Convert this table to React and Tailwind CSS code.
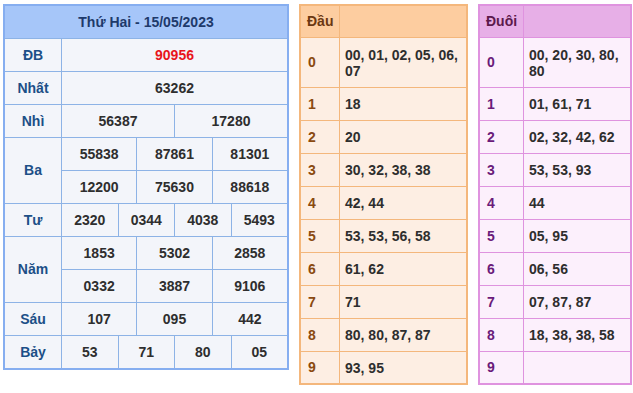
import React from "react";

const font = { fontFamily: '"Liberation Sans", Arial, sans-serif' };

const rows = [
  { label: "ĐB", sub: [["90956"]], red: true },
  { label: "Nhất", sub: [["63262"]] },
  { label: "Nhì", sub: [["56387", "17280"]] },
  { label: "Ba", sub: [["55838", "87861", "81301"], ["12200", "75630", "88618"]] },
  { label: "Tư", sub: [["2320", "0344", "4038", "5493"]] },
  { label: "Năm", sub: [["1853", "5302", "2858"], ["0332", "3887", "9106"]] },
  { label: "Sáu", sub: [["107", "095", "442"]] },
  { label: "Bảy", sub: [["53", "71", "80", "05"]] },
];

const dau = [
  "00, 01, 02, 05, 06, 07",
  "18",
  "20",
  "30, 32, 38, 38",
  "42, 44",
  "53, 53, 56, 58",
  "61, 62",
  "71",
  "80, 80, 87, 87",
  "93, 95",
];

const duoi = [
  "00, 20, 30, 80, 80",
  "01, 61, 71",
  "02, 32, 42, 62",
  "53, 53, 93",
  "44",
  "05, 95",
  "06, 56",
  "07, 87, 87",
  "18, 38, 38, 58",
  "",
];

function ResultTable() {
  return (
    <div className="w-[286px] border-2 border-[#86aef0] bg-[#f3f5fa] text-[14px] font-bold">
      <div className="h-[33px] border-b border-[#8db3e6] bg-[#a6c6f9] flex items-center justify-center text-[#1e3a6b]">
        Thứ Hai - 15/05/2023
      </div>
      {rows.map((r, i) => {
        const last = i === rows.length - 1;
        return (
          <div key={i} className={`flex ${last ? "" : "border-b border-[#8db3e6]"}`}>
            <div className="w-[57px] shrink-0 border-r border-[#8db3e6] flex items-center justify-center text-[#1c4f87]">
              {r.label}
            </div>
            <div className="flex-1 flex flex-col">
              {r.sub.map((vals, j) => (
                <div
                  key={j}
                  className={`flex ${j < r.sub.length - 1 ? "h-[33px] border-b border-[#8db3e6]" : "h-[32px]"}`}
                >
                  {vals.map((v, k) => (
                    <div
                      key={k}
                      className={`flex-1 basis-0 flex items-center justify-center ${k > 0 ? "border-l border-[#8db3e6]" : ""} ${r.red ? "text-[#e8141c]" : "text-[#2e2e2e]"}`}
                    >
                      {v}
                    </div>
                  ))}
                </div>
              ))}
            </div>
          </div>
        );
      })}
    </div>
  );
}

function LotoTable({ title, data, widthCls, labelCls, border, headBg, cellBg, headText, digitText }) {
  return (
    <div className={`${widthCls} border-2 ${border} ${cellBg} text-[14px] font-bold`}>
      <div className={`flex h-[32px] border-b ${border} ${headBg}`}>
        <div className={`${labelCls} shrink-0 border-r ${border} flex items-center pl-[6px] ${headText}`}>
          {title}
        </div>
        <div className="flex-1" />
      </div>
      {data.map((v, i) => {
        const last = i === data.length - 1;
        const tall = i === 0;
        return (
          <div
            key={i}
            className={`flex ${tall ? "h-[50px]" : last ? "h-[31px]" : "h-[33px]"} ${last ? "" : `border-b ${border}`}`}
          >
            <div className={`${labelCls} shrink-0 border-r ${border} flex items-center pl-[7px] ${digitText}`}>
              {i}
            </div>
            <div className="flex-1 flex items-center pl-[5px] pr-[3px] leading-[16px] text-[#2e2e2e]">
              {v}
            </div>
          </div>
        );
      })}
    </div>
  );
}

export default function App() {
  return (
    <div className="w-[633px] h-[393px] bg-white flex items-start pt-[4px] pl-[3px]" style={font}>
      <ResultTable />
      <div className="ml-[10px]">
        <LotoTable
          title="Đầu"
          data={dau}
          widthCls="w-[169px]"
          labelCls="w-[39px]"
          border="border-[#f4b77c]"
          headBg="bg-[#fdcda0]"
          cellBg="bg-[#fdeee3]"
          headText="text-[#6b3812]"
          digitText="text-[#8a4a10]"
        />
      </div>
      <div className="ml-[10px]">
        <LotoTable
          title="Đuôi"
          data={duoi}
          widthCls="w-[154px]"
          labelCls="w-[44px]"
          border="border-[#df93df]"
          headBg="bg-[#e7afe7]"
          cellBg="bg-[#fcf0fc]"
          headText="text-[#5c1a4c]"
          digitText="text-[#6a1b7a]"
        />
      </div>
    </div>
  );
}
